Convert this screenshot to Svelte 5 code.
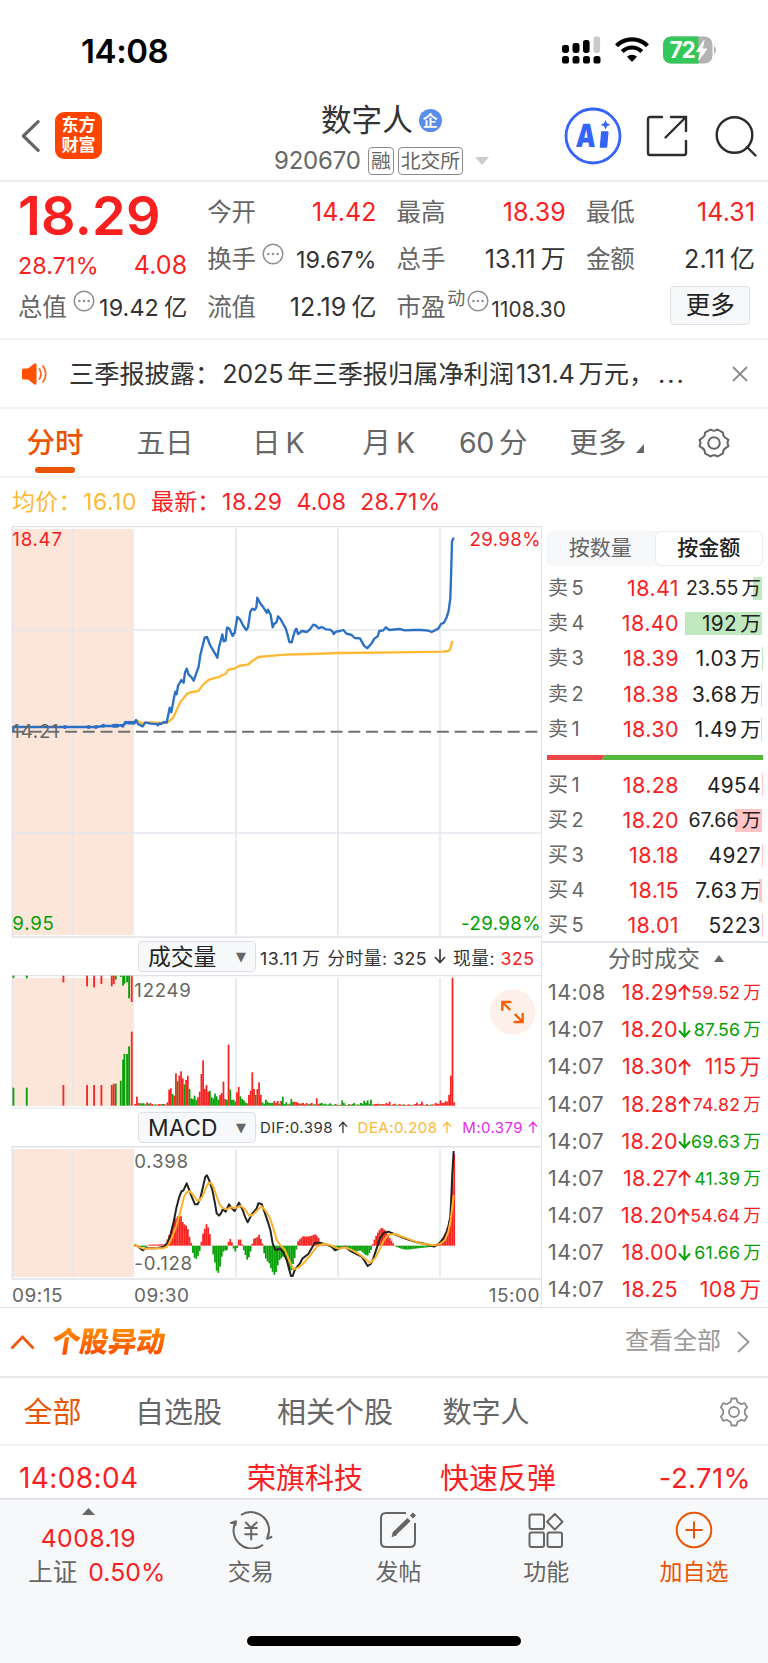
<script>
  const tabs = [
    { label: '分时', active: true },
    { label: '五日' },
    { label: '日', suffix: 'K' },
    { label: '月', suffix: 'K' },
    { prefix: '60', label: '分' }
  ];

  const asks = [
    { n: 5, price: '18.41', amount: '23.55', wan: true, bar: 9 },
    { n: 4, price: '18.40', amount: '192', wan: true, bar: 77 },
    { n: 3, price: '18.39', amount: '1.03', wan: true, bar: 0.5 },
    { n: 2, price: '18.38', amount: '3.68', wan: true, bar: 1.5 },
    { n: 1, price: '18.30', amount: '1.49', wan: true, bar: 0.7 }
  ];
  const bids = [
    { n: 1, price: '18.28', amount: '4954', bar: 0.4 },
    { n: 2, price: '18.20', amount: '67.66', wan: true, bar: 27 },
    { n: 3, price: '18.18', amount: '4927', bar: 0.4 },
    { n: 4, price: '18.15', amount: '7.63', wan: true, bar: 3 },
    { n: 5, price: '18.01', amount: '5223', bar: 0.4 }
  ];
  const trades = [
    ['14:08', '18.29', 'up', '59.52', 'r'],
    ['14:07', '18.20', 'down', '87.56', 'g'],
    ['14:07', '18.30', 'up', '115', 'r'],
    ['14:07', '18.28', 'up', '74.82', 'r'],
    ['14:07', '18.20', 'down', '69.63', 'g'],
    ['14:07', '18.27', 'up', '41.39', 'g'],
    ['14:07', '18.20', 'up', '54.64', 'r'],
    ['14:07', '18.00', 'down', '61.66', 'g'],
    ['14:07', '18.25', '', '108', 'r']
  ];

  // Chart coordinates run at three units per pixel.
  const price =
    '40,634 40,621 195,621 266,621 288,621 310,618 345,618 370,615 377,608 403,607 408,600 414,612 428,619 436,607 452,611 470,612 474,616 478,610 483,612 492,606 500,608 509,563 514,577 521,538 526,515 530,523 534,498 544,480 551,488 555,458 560,446 566,464 573,470 581,482 596,440 601,405 614,353 621,351 630,375 640,392 652,413 657,382 667,343 671,364 677,362 681,323 688,326 698,348 704,338 712,291 720,298 730,318 739,330 744,322 751,275 757,266 764,270 769,262 772,233 780,249 790,262 800,278 804,269 812,285 818,322 822,312 830,306 834,289 842,298 848,309 857,325 863,345 868,366 875,367 881,345 885,332 889,326 894,342 906,333 920,336 930,328 940,314 948,317 956,325 965,321 978,328 990,329 998,335 1001,342 1008,335 1020,333 1030,330 1040,341 1055,345 1064,354 1080,355 1092,377 1102,385 1115,370 1123,356 1133,349 1138,333 1150,331 1158,322 1168,330 1198,327 1215,331 1240,330 1265,330 1285,332 1295,336 1315,326 1323,312 1332,308 1340,292 1346,272 1351,235 1354,140 1356,65 1361,53';
  const average =
    '403,606 414,603 425,610 450,607 480,609 503,607 519,594 530,570 540,548 560,523 568,518 595,513 610,493 627,479 660,470 667,465 677,462 684,450 705,445 717,438 745,433 757,423 775,411 820,407 855,404 930,402 1020,399 1190,397 1330,395 1345,393 1351,388 1357,362';
  const dif =
    '403,945 415,950 428,961 436,955 470,955 492,950 503,938 512,912 521,875 530,830 538,800 545,783 550,782 560,760 567,778 575,800 585,823 593,823 601,805 608,775 616,740 621,736 628,752 637,780 645,820 650,850 657,857 663,850 668,838 677,845 687,823 695,835 704,843 717,818 728,840 735,860 743,877 755,853 770,835 775,820 785,822 795,850 805,880 811,900 818,940 825,958 830,960 840,955 850,968 860,990 868,1020 873,1038 878,1038 885,1018 900,1000 908,985 925,972 935,955 945,938 960,938 980,944 995,950 1005,961 1020,955 1035,950 1050,962 1065,970 1085,980 1092,990 1103,1008 1112,1002 1120,985 1130,955 1140,925 1152,908 1165,905 1190,915 1220,927 1250,937 1280,943 1302,950 1318,940 1330,925 1340,905 1346,885 1351,860 1354,800 1357,730 1361,663';
  const dea =
    '403,945 415,950 430,956 470,955 490,955 503,948 515,925 530,885 541,845 552,800 560,787 568,783 580,795 590,810 598,812 608,798 617,775 625,760 632,758 640,770 650,800 660,825 670,835 680,838 692,832 705,835 722,827 735,838 748,858 760,853 775,838 785,829 795,840 810,865 820,895 830,930 840,945 855,960 867,990 880,1018 895,1013 915,995 935,970 952,948 970,942 990,945 1015,956 1035,952 1060,962 1085,978 1110,999 1125,985 1140,955 1152,930 1165,914 1185,912 1220,925 1260,940 1300,946 1320,942 1335,930 1345,905 1352,870 1357,830 1361,795';

  const dots = [195, 266, 288, 310, 341, 347, 352, 368, 377, 387, 395, 402];

  const auction = [
    [40, 54, 7, 'g'], [80, 54, 8, 'g'], [190, 62, 20, 'r'], [261, 62, 32, 'r'], [282, 62, 35, 'r'],
    [304, 62, 25, 'r'], [335, 62, 32, 'r'], [341, 66, 25, 'r'], [347, 66, 12, 'g'], [362, 75, 4, 'g'],
    [369, 138, 30, 'g'], [373, 155, 24, 'g'], [381, 155, 20, 'g'], [387, 178, 68, 'g'], [395, 222, 79, 'r']
  ];

  const volume =
    '5r 27r 8r 7g 7g 7g 4g 10r 6g 8r 5r 3g 4g 3r 5r 4r 5g 5r 3g 10r 48r 52r 35g 30r 97r 73g 90r 103r 82r 64g 77r 90r 50g 22g 20g 30g 16g 25r 42r 95r 136r 50r 62r 42r 45g 25g 22g 36g 28g 18g 32r 38r 72r 20r 18g 183r 48g 17g 18g 12g 40r 56r 28g 20g 16g 10g 7g 32r 45r 100r 50r 32g 50r 70r 33r 10g 6g 18g 12g 8g 8g 8g 14r 8r 14r 6g 14r 27g 5g 10g 4r 6g 20g 11g 12r 11r 8r 6g 7r 8r 4r 8r 4g 6r 8r 4g 4g 22r 5r 7g 8g 4g 6g 3g 4g 7g 3g 2r 5g 3r 2g 3r 16g 8g 3r 2g 5g 3r 5g 8g 3r 4g 3g 8g 6g 15g 9g 16g 6g 18g 3g 5r 5r 6r 5r 4g 5r 4r 8r 6r 12r 2g 4r 6r 3g 3r 5r 2r 4g 3r 2r 4r 3g 2r 3r 5r 9r 3r 5r 12r 3g 2r 5r 2r 3g 4r 3r 8r 6r 6r 16r 8r 9r 14r 12r 32r 90r 384r 10r'
      .split(' ')
      .map((v, i) => ({ x: 403 + i * 5.09, h: parseInt(v), c: v.slice(-1) }));

  const histPoints = [
    [403, 2], [420, -4], [438, -4], [445, 3], [495, 4], [505, 30], [512, 45], [521, 75], [530, 88], [541, 90], [548, 66],
    [560, 58], [566, 30], [572, 8], [575, -12], [580, -35], [588, -40], [595, -25], [600, -6], [603, 15],
    [608, 38], [618, 65], [624, 52], [629, 30], [634, -6], [640, -35], [651, -88], [657, -72], [663, -35],
    [670, -14], [680, -14], [684, 12], [689, 20], [694, 10], [699, -8], [704, -18], [710, -6], [714, 18],
    [719, 20], [724, 6], [730, -15], [741, -45], [747, -30], [753, -6], [758, 20], [770, 25], [775, 34],
    [780, 22], [786, 6], [790, -20], [798, -45], [805, -50], [812, -70], [821, -88], [827, -78], [835, -45],
    [850, -30], [858, -40], [866, -75], [872, -75], [880, -45], [886, -25], [890, 10], [900, 22], [908, 28], [920, 27],
    [935, 30], [942, 35], [952, 28], [960, 8], [970, 2], [985, -2], [1005, -14], [1015, -8], [1028, -4], [1033, 4],
    [1040, -4], [1052, -14], [1065, -18], [1080, -14], [1095, -28], [1102, -30], [1112, -12], [1118, 10],
    [1127, 30], [1135, 45], [1143, 54], [1152, 48], [1164, 28], [1180, 4], [1186, -3], [1205, -10],
    [1220, -12], [1260, -7], [1300, -3], [1306, 3], [1320, 12], [1332, 28], [1343, 60], [1350, 95], [1355, 170],
    [1359, 275], [1366, 275]
  ];
  function sample(x) {
    const i = histPoints.findIndex((p) => p[0] > x);
    if (i < 1) return 0;
    const [x0, y0] = histPoints[i - 1];
    const [x1, y1] = histPoints[i];
    return y0 + ((y1 - y0) * (x - x0)) / (x1 - x0);
  }
  const hist = Array.from({ length: 189 }, (_, i) => {
    const x = 403 + i * 5.09;
    return { x, v: sample(x + 1) };
  });
</script>

{#snippet dotsIcon()}
  <svg class="info" viewBox="0 0 22 22"><circle cx="11" cy="11" r="9.8" fill="none" stroke="#8f8f8f" stroke-width="1.500" /><circle cx="6.4" cy="11" r="1.3" fill="#8f8f8f" /><circle cx="11" cy="11" r="1.3" fill="#8f8f8f" /><circle cx="15.6" cy="11" r="1.3" fill="#8f8f8f" /></svg>
{/snippet}

{#snippet level(side, row)}
  <div class="level">
    <i class="depth {side}" style="width: {row.bar}px"></i>
    <span class="lv">{side === 'ask' ? '卖' : '买'}<b>{row.n}</b></span>
    <span class="pr">{row.price}</span>
    <span class="am" class:tight={row.amount.length > 4}>{row.amount}{#if row.wan}<em>万</em>{/if}</span>
  </div>
{/snippet}

<main>
  <div class="status">
    <span class="clock">14:08</span>
    <svg width="160" height="32" viewBox="0 0 160 32">
      <g fill="#000">
        <rect x="1" y="11" width="7" height="8" rx="2.4" /><rect x="11.5" y="9" width="7" height="10" rx="2.4" /><rect x="22" y="6" width="6.6" height="13" rx="2.4" /><rect x="32.5" y="2.5" width="6.6" height="16.5" rx="2.4" fill="#cacaca" />
        <rect x="1" y="22" width="7" height="7.5" rx="2.6" /><rect x="11.5" y="22" width="7" height="7.5" rx="2.6" /><rect x="22" y="22" width="7" height="7.5" rx="2.6" /><rect x="32.5" y="22" width="7" height="7.5" rx="2.6" />
      </g>
      <g fill="none" stroke="#000" stroke-width="4.2"><path d="M55.5 11.7a22 22 0 0 1 31 0" /><path d="M61.2 17.6a13.8 13.8 0 0 1 19.600 0" /></g>
      <path d="M71 28l-5-5.200a7.300 7.300 0 0 1 10 0z" fill="#000" />
      <rect x="102" y="2.500" width="49.500" height="27" rx="8" fill="#b3b3b3" />
      <path d="M110 2.500H137.500v27H110a8 8 0 0 1-8-8V10.500a8 8 0 0 1 8-8z" fill="#34c759" />
      <path d="M153 11.500q4 4.500 0 9z" fill="#b3b3b3" />
      <path d="M143 6.500l-7.500 11h4.300l-2 8.500 8-11h-4.500z" fill="#fff" stroke="#fff" />
      <text x="108.500" y="24.300" class="batt">72</text>
    </svg>
  </div>

  <header>
    <svg class="back" viewBox="0 0 22 36"><path d="M19 3L3.500 18 19 33" fill="none" stroke="#666" stroke-width="3.400" stroke-linecap="round" stroke-linejoin="round" /></svg>
    <div class="logo"><span>东方</span><span>财富</span></div>
    <div class="title">
      <div class="name">数字人<span class="ent">企</span></div>
      <div class="code"><span class="num">920670</span><span class="tag">融</span><span class="tag">北交所</span><svg width="14" height="8" viewBox="0 0 14 8"><path d="M0 0h14L7 8z" fill="#ccc" /></svg></div>
    </div>
    <div class="tools">
      <svg width="58" height="58" viewBox="0 0 58 58"><circle cx="29" cy="29" r="27" fill="none" stroke="#3564fa" stroke-width="2.800" /><text transform="translate(11.500 40) skewX(-3) scale(0.78 1)" class="ai">A</text><path d="M37.800 25h6l-1.300 15h-6z" fill="#3564fa" stroke="#3564fa" stroke-width="1.500" stroke-linejoin="round" /><path d="M41.500 13l1.500 3.300 3.300 1.500-3.300 1.500-1.500 3.300-1.500-3.300-3.300-1.500 3.300-1.500z" fill="#3564fa" /></svg>
      <svg class="share" width="42" height="42" viewBox="0 0 42 42" fill="none" stroke="#2c2c2c" stroke-width="2.400" stroke-linecap="round"><path d="M16 2H4Q2 2 2 4v34q0 2 2 2h34q2 0 2-2V26M25 2h15v14M40 2L19.500 22.500" /></svg>
      <svg class="search" width="42" height="42" viewBox="0 0 42 42" fill="none" stroke="#2c2c2c" stroke-width="2.400" stroke-linecap="round"><circle cx="19.500" cy="19" r="17.800" /><path d="M32 31l8.500 8.500" /></svg>
    </div>
  </header>

  <section class="quote">
    <div class="big">18.29</div>
    <div class="cell"><label>今开</label><span class="red">14.42</span></div>
    <div class="cell"><label>最高</label><span class="red">18.39</span></div>
    <div class="cell"><label>最低</label><span class="red">14.31</span></div>

    <div class="cell change"><span class="red s">28.71%</span><span class="red">4.08</span></div>
    <div class="cell"><label>换手{@render dotsIcon()}</label><span class="s">19.67%</span></div>
    <div class="cell"><label>总手</label><span>13.11<em>万</em></span></div>
    <div class="cell"><label>金额</label><span>2.11<em>亿</em></span></div>

    <div class="cell"><label>总值{@render dotsIcon()}</label><span class="s">19.42<em>亿</em></span></div>
    <div class="cell"><label>流值</label><span>12.19<em>亿</em></span></div>
    <div class="cell"><label>市盈<sup>动</sup>{@render dotsIcon()}</label><span class="xs">1108.30</span></div>
    <div class="cell"><button class="more">更多</button></div>
  </section>

  <section class="notice">
    <svg width="28" height="24" viewBox="0 0 28 24"><path d="M1 8q0-1.500 1.500-1.500H7L13.500 1.500Q15.500 0.500 15.500 3v18q0 2.500-2 1.500L7 17.500H2.500Q1 17.500 1 16z" fill="#ff5000" /><path d="M18.500 7q3 5 0 10M22 4q5.500 8 0 16" fill="none" stroke="#ff6a26" stroke-width="1.800" stroke-linecap="round" /></svg>
    <p>三季报披露：<b>2025</b>年三季报归属净利润<b>131.4</b>万元，<span class="dots">...</span></p>
    <svg class="x" width="16" height="16" viewBox="0 0 16 16"><path d="M1 1l14 14M15 1L1 15" stroke="#8c8c8c" stroke-width="1.800" /></svg>
  </section>

  <nav class="period">
    {#each tabs as t}
      <span class:active={t.active}>{#if t.prefix}<b class="pre">{t.prefix}</b>{/if}{t.label}{#if t.suffix}<b>{t.suffix}</b>{/if}</span>
    {/each}
    <span>更多<svg class="corner" width="8" height="9" viewBox="0 0 8 9"><path d="M8 0v9H0z" fill="#666" /></svg></span>
    <svg width="34" height="34" viewBox="0 0 34 34" fill="none" stroke="#666" stroke-width="2"><circle cx="17" cy="17" r="5.800" /><path stroke-linejoin="round" d="M13.500 3.500Q17 6 20.500 3.500L26 6.600Q25.800 10.500 29.500 12.500L31.500 13.800Q29.500 17 31.500 20.200L29.500 21.500Q25.800 23.500 26 27.400L20.500 30.500Q17 28 13.500 30.500L8 27.400Q8.200 23.500 4.500 21.500L2.500 20.200Q4.500 17 2.500 13.800L4.500 12.500Q8.200 10.500 8 6.600Z" /></svg>
  </nav>

  <div class="legend"><span class="yel">均价：<b>16.10</b></span><span>最新：<b>18.29</b></span><span>4.08</span><span>28.71%</span></div>

  <section class="market">
    <div class="charts">
      <svg class="plot" width="542" height="412" viewBox="0 18 1626 1236">
        <rect x="36" y="27" width="366" height="1218" fill="#fce6da" />
        <g stroke="#e4e7ed" stroke-width="5"><path d="M219 25V1245M708 25V1245M1014 25V1245M1320 25V1245M36 330H1624M36 939H1624" /></g>
        <path d="M37 20V1254M36 1251H1624" stroke="#dfe2e8" stroke-width="4" />
        <path d="M36 19.500H1626" stroke="#dfe2e8" stroke-width="4" />
        <path d="M36 635H1624" stroke="#707070" stroke-width="6" stroke-dasharray="36 17.100" />
        <g fill="none" stroke-width="7" stroke-linejoin="round"><polyline points={average} stroke="#fdb933" /><polyline points={price} stroke="#2b70c3" /></g>
        {#each dots as d}<circle cx={d} cy={d > 370 ? 608 : d > 300 ? 617 : 621} r="6" fill="#2b70c3" />{/each}
        <text x="37" y="77" fill="#f8211f">18.47</text>
        <text x="37" y="653" fill="#666">14.21</text>
        <text x="37" y="1229" fill="#00a000">9.95</text>
        <text x="1623" y="77" text-anchor="end" class="pct" fill="#f8211f">29.98%</text>
        <text x="1623" y="1229" text-anchor="end" class="pct" fill="#00a000">-29.98%</text>
      </svg>

      <div class="sub">
        <div class="pick"><span>成交量</span><i>▼</i></div>
        <div class="vals vol"><span>13.11<em>万</em></span><span>分时量: 325</span><svg width="12" height="15" viewBox="0 0 12 15"><path d="M6 0v13M1 8l5 5.500L11 8" /></svg><span>现量: <b class="red">325</b></span></div>
      </div>
      <svg class="plot" width="542" height="134" viewBox="0 135 1626 402">
        <rect x="36" y="144" width="366" height="384" fill="#fce6da" />
        <path d="M219 144V528M708 144V528M1014 144V528M1320 144V528" stroke="#e4e7ed" stroke-width="5" />
        <path d="M37 136V528M36 137H1624" stroke="#dfe2e8" stroke-width="4" />
        <path d="M36 534H1624" stroke="#eceef1" stroke-width="5" />
        {#each auction as [x, h, t, c]}
          <rect x={x - 2.500} y={527 - h} width="5.500" height={h} class={c} />
          <rect x={x - 2.500} y="137" width="5.500" height={t} class={c} />
        {/each}
        {#each volume as b}<rect x={b.x} y={527 - b.h} width="5.300" height={b.h} class={b.c} />{/each}
        <text x="403" y="201" fill="#666">12249</text>
        <circle cx="1538" cy="246" r="68" fill="#fdf1ea" />
        <path d="M1531 240L1507 216M1507 242V216H1534M1544 252L1568 276M1568 249V276H1541" fill="none" stroke="#f2600c" stroke-width="7" />
      </svg>

      <div class="sub">
        <div class="pick"><span class="md">MACD</span><i>▼</i></div>
        <div class="vals macd">
          <span>DIF:0.398 <svg width="10" height="12" viewBox="0 0 12 15"><path d="M6 15V2M1 7l5-5.500L11 7" /></svg></span>
          <span class="yel">DEA:0.208 <svg width="10" height="12" viewBox="0 0 12 15"><path d="M6 15V2M1 7l5-5.500L11 7" /></svg></span>
          <span class="mag">M:0.379 <svg width="10" height="12" viewBox="0 0 12 15"><path d="M6 15V2M1 7l5-5.500L11 7" /></svg></span>
        </div>
      </div>
      <svg class="plot" width="542" height="134" viewBox="0 648 1626 402">
        <rect x="36" y="657" width="366" height="384" fill="#fce6da" />
        <path d="M219 657V1041M708 657V1041M1014 657V1041M1320 657V1041" stroke="#e4e7ed" stroke-width="5" />
        <path d="M37 650V1047M36 650H1624M36 1047H1624" stroke="#dfe2e8" stroke-width="4.500" />
        {#each hist as b}<rect x={b.x} y={b.v > 0 ? 947 - b.v : 947} width="5.300" height={Math.abs(b.v)} class={b.v > 0 ? 'r' : 'g'} />{/each}
        <g fill="none" stroke-width="6" stroke-linejoin="round"><polyline points={dif} stroke="#222" /><polyline points={dea} stroke="#fdb02b" /></g>
        <text x="403" y="713" fill="#666">0.398</text>
        <text x="403" y="1020" fill="#666">-0.128</text>
      </svg>
      <div class="times"><span>09:15</span><span class="open">09:30</span><span class="close">15:00</span></div>
    </div>

    <aside>
      <div class="toggle"><span>按数量</span><span class="on">按金额</span></div>
      <div class="levels">{#each asks as row}{@render level('ask', row)}{/each}</div>
      <svg class="ratio" width="216" height="5" viewBox="0 0 216 5"><path d="M0 0H58L55 5H0z" fill="#ea4748" /><path d="M58 0H216V5H55z" fill="#55b83d" /></svg>
      <div class="levels">{#each bids as row}{@render level('bid', row)}{/each}</div>
      <div class="deals">分时成交<svg width="10" height="7" viewBox="0 0 10 7"><path d="M5 0l5 7H0z" fill="#666" /></svg></div>
      {#each trades as [time, p, dir, amt, c]}
        <div class="trade">
          <span class="tm">{time}</span>
          <span class="tp">{p}</span>
          <svg class={dir === 'down' ? 'dn' : 'up'} width="13" height="16" viewBox="0 0 13 16">
            {#if dir === 'up'}<path d="M6.500 16V2M1 7.500l5.500-6 5.500 6" />{:else if dir === 'down'}<path d="M6.500 0v14M1 8.500l5.500 6 5.500-6" />{/if}
          </svg>
          <span class="ta {c}" class:small={amt.length > 4}>{amt}<em>万</em></span>
        </div>
      {/each}
    </aside>
  </section>

  <section class="moves">
    <svg width="25" height="15" viewBox="0 0 25 15"><path d="M1.500 13.500L12.500 2l11 11.500" fill="none" stroke="#ee5a10" stroke-width="2.800" /></svg>
    <h2>个股异动</h2>
    <span class="all">查看全部</span>
    <svg width="13" height="22" viewBox="0 0 13 22"><path d="M1 1l10.500 10L1 21" fill="none" stroke="#999" stroke-width="2" /></svg>
  </section>

  <nav class="filter">
    <span class="active">全部</span><span>自选股</span><span>相关个股</span><span>数字人</span>
    <svg width="28" height="30" viewBox="0 0 28 30" fill="none" stroke="#8c8c8c" stroke-width="1.800" stroke-linejoin="round"><circle cx="14" cy="15" r="5" /><path d="M11.500 1.500h5l1 3.700q2 .6 3.500 2l3.800-1 2.300 4.300-2.300 2.700v3.600l2.300 2.700-2.300 4.300-3.800-1q-1.500 1.400-3.500 2l-1 3.700h-5l-1-3.700q-2-.6-3.500-2l-3.800 1-2.300-4.300 2.300-2.700v-3.600L.9 10.500l2.300-4.300 3.800 1q1.500-1.400 3.500-2z" /></svg>
  </nav>

  <div class="move"><span class="c1">14:08:04</span><span class="c2">荣旗科技</span><span class="c3">快速反弹</span><span class="c4">-2.71%</span></div>

  <footer>
    <div class="bar">
      <div class="index"><svg width="13" height="7" viewBox="0 0 13 7"><path d="M6.500 0L13 7H0z" fill="#666" /></svg><b>4008.19</b><span>上证<b>0.50%</b></span></div>
      <div class="act"><svg width="44" height="38" viewBox="0 0 44 38" fill="none" stroke="#666" stroke-width="2" stroke-linejoin="round"><path d="M12 4A18.200 18.200 0 0 1 38 27.700L43.200 25.700M38.200 27.500l1.300-5.500M34 33.700A18.200 18.200 0 0 1 7 10.300L1.300 12.300M7 10.300L6.200 15" /><path d="M16.300 11L22 16.700 28.300 11M15.500 16.900H28.700M15.500 23.300H28.700M22.200 16.700V29.200" /></svg><span>交易</span></div>
      <div class="act"><svg width="38" height="38" viewBox="0 0 38 38" fill="none" stroke="#666" stroke-width="2"><path d="M27 2H7Q2 2 2 7v24q0 5 5 5h24q5 0 5-5V12" /><path d="M15 23L30 8.500M32.500 6L35.500 3" stroke-width="4.500" /><path d="M13 25.500l1.500-4.500 3 3z" fill="#666" stroke-width="1" /></svg><span>发帖</span></div>
      <div class="act"><svg width="38" height="38" viewBox="0 0 38 38" fill="none" stroke="#666" stroke-width="2"><rect x="2.500" y="3.500" width="14.500" height="14.500" rx="2" /><rect x="2.500" y="21.500" width="14.500" height="14.500" rx="2" /><rect x="20.500" y="21.500" width="14.500" height="14.500" rx="2" /><path d="M27.800 3l7.700 7.800-7.700 7.800-7.700-7.800z" stroke-linejoin="round" /></svg><span>功能</span></div>
      <div class="act add"><svg width="38" height="38" viewBox="0 0 38 38" fill="none" stroke="#ea5504" stroke-width="2"><circle cx="19" cy="19" r="17.300" /><path d="M10.500 19h17M19 10.500v17" /></svg><span>加自选</span></div>
    </div>
    <div class="home"></div>
  </footer>
</main>

<style>
  :global(body) { margin: 0; background: #fff; }
  main { width: 768px; height: 1663px; overflow: hidden; display: flex; flex-direction: column; background: #fff; color: #333; font-family: Inter, 'Noto Sans CJK SC', sans-serif; }
  main > * { flex: none; box-sizing: border-box; }
  svg { display: block; flex: none; }
  b { font-weight: 400; }
  em { font-style: normal; margin-left: 3px; }
  span, label { white-space: nowrap; }
  .red { color: #f8211f; }

  .status { height: 96px; padding: 34px 47px 0 81px; display: flex; justify-content: space-between; align-items: flex-start; }
  .clock { font-size: 33px; line-height: 34px; font-weight: 600; color: #000; letter-spacing: -0.4px; }
  .batt { font: 700 22.500px Inter, sans-serif; fill: #fff; letter-spacing: -1px; }

  header { height: 86px; padding-left: 20px; display: flex; border-bottom: 2px solid #ebebeb; }
  .back { width: 21px; height: 36px; margin-top: 22px; }
  .logo { width: 47px; height: 47px; margin: 16px 0 0 14px; padding-top: 4px; box-sizing: border-box; border-radius: 9px; background: #ff4400; color: #fff; display: flex; flex-direction: column; align-items: center; font-size: 17px; line-height: 19.500px; font-weight: 700; }
  .title { margin-left: 173px; width: 215px; }
  .name { display: flex; font-size: 30.600px; line-height: 36px; margin: 6px 0 0 46px; align-items: center; }
  .ent { width: 23px; height: 23px; line-height: 23px; border-radius: 50%; background: #5a8ceb; color: #fff; font-size: 15px; font-weight: 700; text-align: center; margin-left: 6px; }
  .code { display: flex; align-items: center; height: 30px; margin-top: 7.500px; color: #666; }
  .num { font-size: 24px; width: 86px; letter-spacing: -0.200px; margin: 0 8px 0 -1px; }
  .tag { border: 1.500px solid #8a8a8a; border-radius: 4px; font-size: 19.800px; line-height: 26px; padding: 0 2px; margin-right: 4px; }
  .code svg { margin-left: 8px; }
  .tools { display: flex; align-items: flex-start; margin-left: 74px; padding-top: 11px; }
  .ai { font: 900 32px Inter, sans-serif; fill: #3564fa; }
  .share { margin: 8px 0 0 24px; }
  .search { margin: 9px 0 0 27px; }

  .quote { height: 158px; padding: 6px 0 0 18px; display: grid; grid-template-columns: repeat(4, 169.300px); column-gap: 20px; grid-template-rows: 48px 47.500px 47.500px; border-bottom: 2px solid #f4f4f4; }
  .big { font-size: 54px; line-height: 55px; font-weight: 600; color: #f8211f; letter-spacing: 0.200px; }
  .cell { display: flex; justify-content: space-between; align-items: center; font-size: 25px; line-height: 47px; letter-spacing: 0.100px; }
  .cell em { margin-left: 5px; }
  .cell label { display: flex; align-items: center; font-size: 24.500px; color: #666; letter-spacing: -0.200px; }
  .cell .s { font-size: 23.300px; }
  .cell .xs { font-size: 20.800px; padding-top: 5px; }
  .change { padding-top: 12px; box-sizing: border-box; }
  .info { width: 22px; height: 22px; margin: -12px 0 0 6px; }
  sup { font-size: 18px; line-height: 20px; margin: -17px -4px 0 2px; vertical-align: baseline; }
  .more { width: 80px; height: 39px; margin: -4px 5px 0 auto; padding: 0; border: 1.500px solid #dfe1e6; border-radius: 4px; background: #f7f8fa; color: #222; font: 400 24.500px/36px Inter, 'Noto Sans CJK SC', sans-serif; }

  .notice { height: 69px; padding: 0 20px 0 21px; display: flex; align-items: center; border-bottom: 2px solid #f4f4f4; }
  .notice p { margin: 0 auto 0 20px; font-size: 25.200px; line-height: 40px; white-space: nowrap; }
  .notice p b { margin: 0 4px 0 2px; letter-spacing: -0.200px; }
  .dots { letter-spacing: 2px; margin-left: 4px; }

  .period { height: 69px; padding: 0 0 0 26.500px; display: grid; grid-template-columns: 110px 115.500px 110.500px 96.500px 110.500px 127px 34px; align-items: center; border-bottom: 2px solid #f4f4f4; font-size: 28.500px; line-height: 60px; color: #666; }
  .period span { position: relative; padding-top: 1px; }
  .period b { margin-left: 5px; }
  .period b.pre { margin: 0 5px 0 0; letter-spacing: -0.300px; }
  .period .active { color: #ea5504; font-weight: 500; }
  .active { color: #ea5504; }
  .period .active::after { content: ''; position: absolute; left: 8px; bottom: 0; width: 40px; height: 6px; border-radius: 3px; background: #ea5504; }
  .corner { display: inline-block; margin-left: 9px; }

  .legend { height: 48px; padding-left: 12px; display: flex; gap: 14px; font-size: 23px; line-height: 48px; color: #f8211f; letter-spacing: 0.200px; }
  .legend b { letter-spacing: 0.500px; margin-left: 1.500px; }
  .yel { color: #fdb933; }

  .market { height: 782px; display: flex; border-bottom: 1.500px solid #e4e4e8; }
  .charts { width: 542px; box-sizing: border-box; border-right: 1.500px solid #e4e7ed; }
  .plot text { font: 400 56px Inter, sans-serif; letter-spacing: 2.200px; }
  .plot text.pct { letter-spacing: 1.200px; }
  .plot .r { fill: #f92422; }
  .plot .g { fill: #07a007; }
  .sub { height: 37px; display: flex; align-items: center; padding-left: 138px; }
  .pick { width: 118px; height: 31px; box-sizing: border-box; border: 1.500px solid #dfe1e6; border-radius: 4px; background: #f7f8fa; display: flex; align-items: center; justify-content: space-between; padding: 0 9px; font-size: 22.800px; line-height: 28px; color: #222; }
  .pick i { font: 400 13px/28px 'DejaVu Sans', sans-serif; color: #666; }
  .md { letter-spacing: 0.300px; }
  .vals { display: flex; align-items: center; flex: 1; margin-left: 4px; }
  .vals svg { display: inline-block; fill: none; stroke: currentColor; stroke-width: 1.600; }
  .vol { font-size: 17.800px; gap: 7px; letter-spacing: 0.450px; }
  .vol em { margin-left: 4px; }
  .macd { font-size: 15px; gap: 10px; letter-spacing: 0.450px; }
  .mag { color: #e32be8; }
  .times { height: 28px; padding: 0 1px 0 12px; display: flex; font-size: 19px; line-height: 31px; color: #666; letter-spacing: 0.500px; }
  .open { width: 60px; margin-left: 71px; }
  .times span:first-child { width: 51px; }
  .close { margin-left: auto; }

  aside { width: 226px; }
  .toggle { width: 217px; height: 35px; margin: 5px 0 5px 4px; display: flex; background: #f7f8fa; border-radius: 6px; font-size: 21px; line-height: 33px; color: #666; text-align: center; }
  .toggle span { width: 109px; box-sizing: border-box; }
  .toggle .on { background: #fff; border: 1.500px solid #ececf0; border-radius: 6px; color: #222; font-weight: 500; line-height: 31px; }
  .level { position: relative; height: 35.200px; display: flex; align-items: center; padding: 0 7px 0 6px; font-size: 21.500px; line-height: 35px; letter-spacing: 0.400px; }
  .depth { position: absolute; right: 6px; top: 6px; height: 23px; }
  .ask { background: #bfe8be; }
  .bid { background: #ffc4c5; }
  .level span { position: relative; }
  .lv { color: #666; width: 50px; font-size: 20px; }
  .lv b { margin-left: 3px; }
  .pr { color: #f8211f; width: 81px; text-align: right; }
  .am { flex: 1; text-align: right; color: #222; font-size: 20.800px; }
  .am.tight { font-size: 19.500px; letter-spacing: 0; }
  .level em, .trade em { margin-left: 3px; letter-spacing: 0; }
  .ratio { margin: 8.500px 0 7px 5px; }
  .deals { height: 30.500px; border-top: 2px solid #e4e7ed; margin-top: -2px; display: flex; align-items: center; gap: 14px; font-size: 23px; line-height: 30px; color: #666; padding-left: 66px; }
  .trade { height: 37.200px; display: flex; align-items: center; padding: 0 7px 0 6px; font-size: 21.500px; line-height: 37px; letter-spacing: 0.400px; }
  .tm { color: #666; width: 71px; }
  .tp { color: #f8211f; width: 59px; text-align: right; }
  .trade svg { fill: none; stroke: #f8211f; stroke-width: 2; margin-left: 0; }
  .trade svg.dn { stroke: #07a007; }
  .ta { flex: 1; text-align: right; }
  .ta.r { color: #f8211f; }
  .ta.g { color: #07a007; }
  .ta.small { font-size: 17.800px; letter-spacing: 0.200px; }

  .moves { height: 70px; padding: 0 18px 0 10px; display: flex; align-items: center; border-bottom: 2px solid #e9e9e9; }
  h2 { margin: 0 auto 0 17px; font-size: 28.500px; line-height: 40px; font-weight: 900; letter-spacing: -0.300px; padding-right: 8px; transform: skewX(-9deg); background: linear-gradient(#ff8a00 20%, #ff5200 75%); background-clip: text; color: transparent; }
  .all { font-size: 24px; line-height: 34px; color: #999; margin: -2px 16px 0 0; }

  .filter { height: 68px; padding: 3px 20px 0 23.500px; display: flex; align-items: center; font-size: 29px; line-height: 60px; color: #666; border-bottom: 2px solid #f4f4f4; }
  .filter span:nth-child(1) { margin-right: 53.500px; }
  .filter span:nth-child(2) { margin-right: 55px; }
  .filter span:nth-child(3) { margin-right: 49.500px; }
  .filter svg { margin: -2px 0 0 auto; }

  .move { height: 52px; padding: 0 17px 0 19px; display: flex; font-size: 29px; line-height: 65px; color: #f8211f; }
  .c1 { width: 228px; font-size: 28px; letter-spacing: 0.400px; }
  .c2 { width: 193px; }
  .c4 { margin-left: auto; font-size: 27.500px; letter-spacing: 0.400px; }

  footer { height: 166px; background: #f7f8fa; border-top: 2px solid #e2e3e6; display: flex; flex-direction: column; align-items: center; }
  .bar { display: flex; width: 768px; height: 136px; }
  .index { width: 177px; display: flex; flex-direction: column; align-items: center; font-size: 24.500px; line-height: 34px; color: #666; padding-top: 8px; box-sizing: border-box; }
  .index > b { margin-top: 6px; }
  .index b { color: #f8211f; letter-spacing: 0.400px; font-size: 24.800px; }
  .index span { margin: 0 0 0 17px; }
  .index span b { margin-left: 11px; letter-spacing: 0.100px; }
  .act { width: 148px; display: flex; flex-direction: column; align-items: center; font-size: 23px; line-height: 34px; color: #666; padding-top: 11px; box-sizing: border-box; }
  .act span { margin-top: 6px; }
  .add { color: #ea5504; }
  .home { width: 274px; height: 10px; border-radius: 5px; background: #000; }
</style>
